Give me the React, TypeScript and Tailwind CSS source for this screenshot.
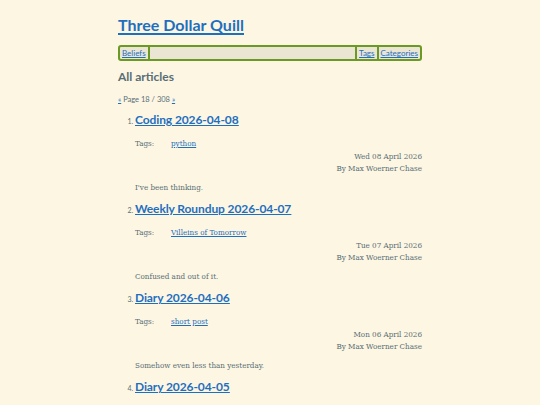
import React from "react";

const heading = { fontFamily: 'Lato, "Noto Sans", sans-serif' };
const body = { fontFamily: '"DejaVu Serif Condensed", "DejaVu Serif", serif', fontStretch: "condensed" as const };

type Post = { title: string; tag?: string; date?: string; summary?: string };

const posts: Post[] = [
  { title: "Coding 2026-04-08", tag: "python", date: "Wed 08 April 2026", summary: "I've been thinking." },
  { title: "Weekly Roundup 2026-04-07", tag: "Villeins of Tomorrow", date: "Tue 07 April 2026", summary: "Confused and out of it." },
  { title: "Diary 2026-04-06", tag: "short post", date: "Mon 06 April 2026", summary: "Somehow even less than yesterday." },
  { title: "Diary 2026-04-05" },
];

export default function App() {
  return (
    <div className="h-[405px] w-full overflow-hidden bg-[#fdf6e3] text-[#586e75]" style={body}>
      <div className="mx-auto w-[304px] pt-[13px]">
        <h1 className="text-[16px] font-bold leading-[24px] text-[#1f6fbf] underline decoration-[1.5px] underline-offset-2" style={heading}>
          <a href="#">Three Dollar Quill</a>
        </h1>
        <nav className="mt-[8px] flex h-[16px] items-center rounded-[3px] border-2 border-[#6a9a23] bg-[#ebe5d3] text-[8px] leading-[12px]" style={heading}>
          <a href="#" className="px-[2px] text-[#1f6fbf] underline">Beliefs</a>
          <div className="h-[12px] flex-1 border-x-2 border-[#6a9a23]"></div>
          <a href="#" className="px-[2px] text-[#1f6fbf] underline">Tags</a>
          <div className="h-[12px] w-[2px] bg-[#6a9a23]"></div>
          <a href="#" className="px-[2px] text-[#1f6fbf] underline">Categories</a>
        </nav>
        <h2 className="mt-[7px] text-[12px] font-bold leading-[18px]" style={heading}>All articles</h2>
        <div className="mt-[9px] text-[7.5px] leading-[10px]" style={heading}>
          <a href="#" className="text-[#1f6fbf] underline">«</a> Page 18 / 308 <a href="#" className="text-[#1f6fbf] underline">»</a>
        </div>
        <ol className="mt-[5px] list-decimal pl-[17px]">
          {posts.map((p, i) => (
            <li key={i} className="h-[89px] text-[7px]" style={heading}>
              <h3 className="inline text-[12px] font-bold leading-[20px] tracking-[-0.1px] text-[#1f6fbf] underline underline-offset-1" style={heading}>
                <a href="#">{p.title}</a>
              </h3>
              {p.tag && (
                <div style={body}>
                  <div className="mt-[9px] flex text-[8px] leading-[10px]">
                    <span className="w-[36px]">Tags:</span>
                    <a href="#" className="text-[#1f6fbf] underline">{p.tag}</a>
                  </div>
                  <div className="mt-[2px] text-right text-[8px] leading-[12px]">
                    <div>{p.date}</div>
                    <div>By Max Woerner Chase</div>
                  </div>
                  <p className="mt-[8px] text-[8px] leading-[10px]">{p.summary}</p>
                </div>
              )}
            </li>
          ))}
        </ol>
      </div>
    </div>
  );
}
